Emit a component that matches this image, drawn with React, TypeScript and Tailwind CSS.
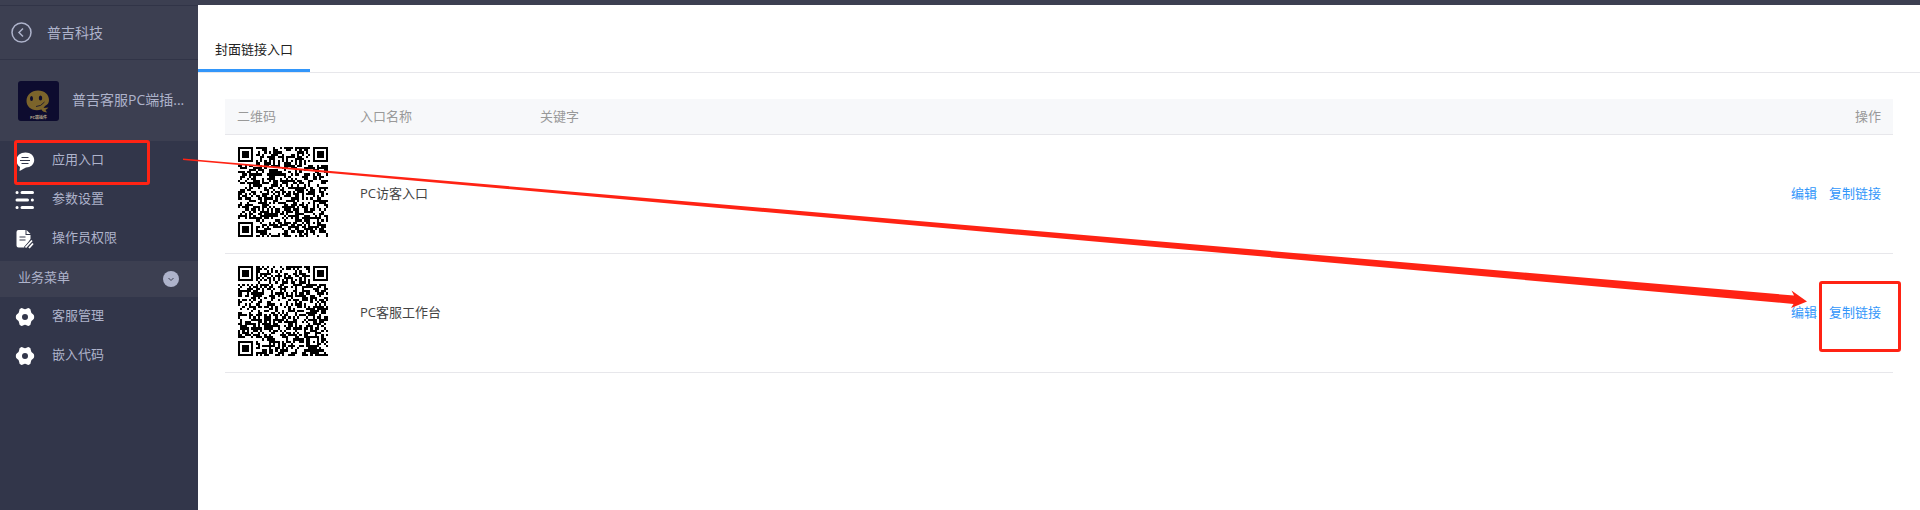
import React from "react";

const QR_SIZE = 41;

function inSquare(x: number, y: number, left: number, top: number, size: number) {
  return x >= left && x < left + size && y >= top && y < top + size;
}

function qrModule(x: number, y: number, next: () => number): boolean {
  const noise = next() > 0.47;
  const corners = [
    [0, 0],
    [QR_SIZE - 7, 0],
    [0, QR_SIZE - 7],
  ];
  for (const [cx, cy] of corners) {
    if (inSquare(x, y, cx - 1, cy - 1, 9)) {
      const d = Math.max(Math.abs(x - cx - 3), Math.abs(y - cy - 3));
      return d === 3 || d <= 1;
    }
  }
  if (inSquare(x, y, 32, 32, 5)) {
    const d = Math.max(Math.abs(x - 34), Math.abs(y - 34));
    return d !== 1;
  }
  if (x === 6) return y % 2 === 0;
  if (y === 6) return x % 2 === 0;
  return noise;
}

function QrCode({ seed, label }: { seed: number; label: string }) {
  let state = seed;
  const next = () => {
    state = (Math.imul(state, 1664525) + 1013904223) >>> 0;
    return state / 4294967296;
  };
  let d = "";
  for (let y = 0; y < QR_SIZE; y++) {
    for (let x = 0; x < QR_SIZE; x++) {
      if (qrModule(x, y, next)) d += `M${x} ${y}h1v1h-1z`;
    }
  }
  return (
    <svg role="img" aria-label={label} viewBox="0 0 41 41" shapeRendering="crispEdges" className="block size-[90px]">
      <path d={d} fill="#000" />
    </svg>
  );
}

function ChatIcon() {
  return (
    <svg viewBox="0 0 20 20" className="size-5 shrink-0" aria-hidden="true">
      <path d="M10.500 1.500C15.500 1.500 19.200 4.500 19.200 9S15.500 16.500 11 16.500C9 17.500 7.500 18.500 4.500 20L5 16C2.500 14.500 1.500 12 1.500 9C1.500 4.500 5.500 1.500 10.500 1.500Z" fill="#fff" />
      <path d="M6.500 6.500h7M5 9.500h10M6.500 12.500h7" stroke="#32364a" strokeWidth="1" />
    </svg>
  );
}

function SlidersIcon() {
  return (
    <svg viewBox="0 0 20 20" className="size-5 shrink-0" aria-hidden="true">
      <g stroke="#fff" strokeWidth="3" strokeLinecap="round">
        <path d="M2 2.500h.1M7 2.500h10.500M2 10h10.500M17.300 10h.1M2 17.500h.1M7 17.500h10.500" />
      </g>
    </svg>
  );
}

function DocumentIcon() {
  return (
    <svg viewBox="0 0 20 20" className="size-5 shrink-0" aria-hidden="true">
      <path d="M3.500 1h7v5h5v4l-6 8.500h-6a2 2 0 0 1-2-2V3a2 2 0 0 1 2-2Z" fill="#fff" />
      <path d="M11.500 1l4 4h-4Z" fill="#fff" />
      <path d="M4.500 8h6M4.500 11h6" stroke="#32364a" strokeWidth="1.200" />
      <path d="M10.500 19.500l7-7.500" stroke="#32364a" strokeWidth="4.500" />
      <path d="M10.500 18.500l6.500-7M14 19l4-4.500" stroke="#fff" strokeWidth="1.800" />
    </svg>
  );
}

function GearIcon() {
  return (
    <svg viewBox="0 0 20 20" className="size-5 shrink-0" aria-hidden="true">
      <path
        fill="#fff"
        fillRule="evenodd"
        d="M6 1.200Q7 .8 8 1.500Q10 3 12 1.500Q13 .8 14 1.200Q16 2 15.800 4Q16 6.500 18 7.200Q19.200 8 19.200 10T18 12.800Q16 13.500 15.800 16Q16 18 14 18.800Q13 19.200 12 18.500Q10 17 8 18.500Q7 19.200 6 18.800Q4 18 4.200 16Q4 13.500 2 12.800Q.8 12 .8 10T2 7.200Q4 6.500 4.200 4Q4 2 6 1.200ZM10 7a3 3 0 1 0 0 6a3 3 0 1 0 0-6Z"
      />
    </svg>
  );
}

function AppLogo() {
  return (
    <svg viewBox="0 0 41 40" className="h-10 w-[41px] shrink-0" aria-hidden="true">
      <rect width="41" height="40" rx="3" fill="#0d0c2f" />
      <path d="M20 9.500C26.500 9.500 31 13.500 31 19C31 21.500 30 23.500 27 25L25.500 27L30.500 26.500C29 28 28 28.500 27.500 29L29 31.500C25.500 31 24 30 23.500 28.500C14.500 31 8.500 26 8.500 20C8.500 14 13.500 9.500 20 9.500Z" fill="#7b642b" />
      <ellipse cx="13.500" cy="17.500" rx="1.500" ry="2.500" fill="#0d0c2f" />
      <ellipse cx="22.500" cy="17" rx="1.700" ry="2.500" fill="#0d0c2f" />
      <path d="M18 25.500Q23 25.500 26.500 21" stroke="#0d0c2f" strokeWidth=".8" fill="none" />
      <text x="20.500" y="37.500" textAnchor="middle" fontSize="4" fontWeight="700" fill="#b5a58a">
        PC端插件
      </text>
    </svg>
  );
}

function MenuItem({
  icon,
  label,
  marked = false,
}: {
  icon: React.ReactNode;
  label: string;
  marked?: boolean;
}) {
  return (
    <li className="relative">
      <a href="#" className="flex h-[39px] items-center gap-[17px] pl-[15px] text-[13px] text-[#aeb3cb]">
        {icon}
        <span className="pb-0.5">{label}</span>
      </a>
      {marked && (
        <span className="pointer-events-none absolute -top-px left-[14px] h-[45px] w-[136px] rounded-[3px] border-3 border-[#ff2314]" />
      )}
    </li>
  );
}

function Sidebar() {
  return (
    <aside className="w-[198px] shrink-0 bg-[#32364a] text-[#aeb3cb]">
      <div className="bg-[#3c3f51]">
        <div className="flex h-[55px] items-center gap-[15px] border-y border-[#313447] pl-[11px]">
          <button type="button" aria-label="返回" className="size-[21px]">
            <svg viewBox="0 0 21 21" fill="none" stroke="#aeb3cb" strokeWidth="1.500">
              <circle cx="10.500" cy="10.500" r="9.500" />
              <path d="M12 6.500L8 10.500l4 4" />
            </svg>
          </button>
          <span className="text-sm">普吉科技</span>
        </div>
        <div className="flex h-[81px] items-center gap-[13px] pl-[18px]">
          <AppLogo />
          <span className="pb-0.5 text-sm whitespace-nowrap">普吉客服PC端插...</span>
        </div>
      </div>
      <nav>
        <ul className="pb-[3px]">
          <MenuItem icon={<ChatIcon />} label="应用入口" marked />
          <MenuItem icon={<SlidersIcon />} label="参数设置" />
          <MenuItem icon={<DocumentIcon />} label="操作员权限" />
        </ul>
        <button
          type="button"
          className="flex h-9 w-full items-center justify-between bg-[#3c3f51] pr-[19px] pl-[18px] text-[13px]"
        >
          <span className="pb-0.5">业务菜单</span>
          <svg viewBox="0 0 16 16" className="size-4" aria-hidden="true">
            <circle cx="8" cy="8" r="8" fill="#aeb3cb" />
            <path d="M5.500 7L8 9.500L10.500 7" fill="none" stroke="#3c3f51" />
          </svg>
        </button>
        <ul>
          <MenuItem icon={<GearIcon />} label="客服管理" />
          <MenuItem icon={<GearIcon />} label="嵌入代码" />
        </ul>
      </nav>
    </aside>
  );
}

const entries = [
  { name: "PC访客入口", seed: 20731, marked: false },
  { name: "PC客服工作台", seed: 98417, marked: true },
];

function EntryTable() {
  return (
    <table className="w-full table-fixed border-collapse text-left text-[13px] text-[#444]">
      <thead>
        <tr className="h-[35px] border-b border-[#e7e7eb] bg-[#f7f8fa] text-[#999]">
          <th className="w-[123px] px-3 font-normal">二维码</th>
          <th className="w-[180px] px-3 font-normal">入口名称</th>
          <th className="px-3 font-normal">关键字</th>
          <th className="w-[180px] px-3 text-right font-normal">操作</th>
        </tr>
      </thead>
      <tbody>
        {entries.map((entry) => (
          <tr key={entry.name} className="h-[119px] border-b border-[#e7e7eb]">
            <td className="pt-3 pl-[13px] align-top">
              <QrCode seed={entry.seed} label={entry.name} />
            </td>
            <td className="px-3">{entry.name}</td>
            <td className="px-3" />
            <td className="px-3">
              <div className="flex justify-end gap-3 text-[#3296fa]">
                <a href="#">编辑</a>
                <span className="relative">
                  <a href="#">复制链接</a>
                  {entry.marked && (
                    <span className="pointer-events-none absolute -top-[22px] -right-5 h-[71px] w-[82px] rounded-[3px] border-3 border-[#ff2314]" />
                  )}
                </span>
              </div>
            </td>
          </tr>
        ))}
      </tbody>
    </table>
  );
}

export default function App() {
  return (
    <div className="relative flex min-h-screen flex-col bg-white font-['Open_Sans','Noto_Sans_CJK_SC',sans-serif]">
      <header className="h-[5px] bg-[#3c3f51]" />
      <div className="flex flex-1">
        <Sidebar />
        <main className="min-w-0 flex-1">
          <div className="flex h-17 items-end border-b border-[#e7e7eb]">
            <button
              type="button"
              className="h-[42px] border-b-3 border-[#3296fa] px-[17px] text-[13px] text-[#222]"
            >
              封面链接入口
            </button>
          </div>
          <div className="px-[27px] pt-[26px]">
            <EntryTable />
          </div>
        </main>
      </div>
      <div className="pointer-events-none absolute top-[158px] right-[113px] left-[183px] h-[150px]">
        <svg viewBox="0 0 1624 150" preserveAspectRatio="none" className="size-full" aria-hidden="true">
          <path d="M0 .5L1611 137.500L1608.500 132.500L1624 143.500L1608 150L1610.500 146L0 2Z" fill="#ff2314" />
        </svg>
      </div>
    </div>
  );
}
